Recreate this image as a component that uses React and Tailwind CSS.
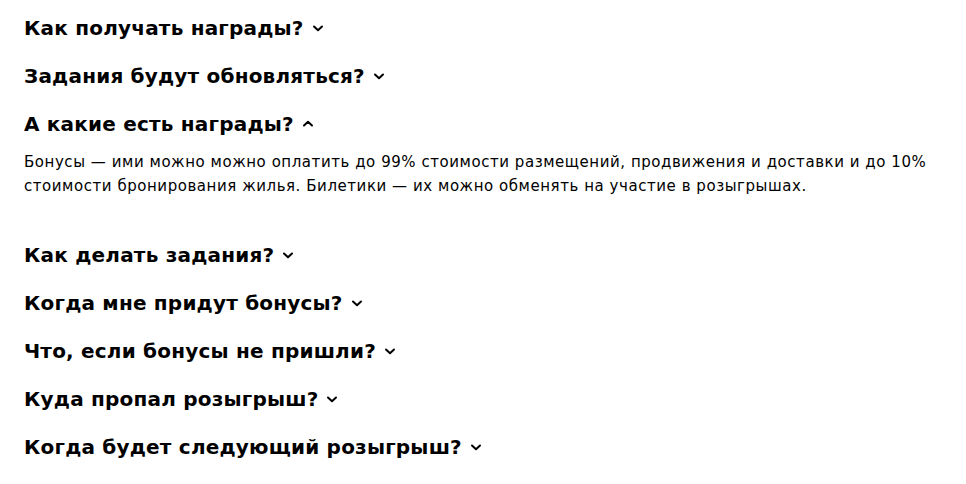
import React from "react";

const Chevron = ({ up }) => (
  <svg width="12" height="12" viewBox="0 0 12 12" className="ml-2 shrink-0" fill="none">
    {up ? (
      <path d="M2 7.5L6 3.8L10 7.5" stroke="#000" strokeWidth="2" strokeLinecap="round" strokeLinejoin="round" />
    ) : (
      <path d="M2 4.5L6 8.2L10 4.5" stroke="#000" strokeWidth="2" strokeLinecap="round" strokeLinejoin="round" />
    )}
  </svg>
);

const Q = ({ children, up }) => (
  <div className="flex h-12 items-center text-[20px] font-bold leading-7 tracking-[0.2px] text-black">
    <span>{children}</span>
    <Chevron up={up} />
  </div>
);

export default function App() {
  return (
    <div className="min-h-screen bg-white pl-6 pt-1" style={{ fontFamily: "'DejaVu Sans', sans-serif" }}>
      <Q>Как получать награды?</Q>
      <Q>Задания будут обновляться?</Q>
      <Q up>А какие есть награды?</Q>
      <p className="mt-[2px] mb-[33px] max-w-[925px] text-[15px] leading-6 tracking-[0.55px] text-black">
        Бонусы — ими можно можно оплатить до 99% стоимости размещений, продвижения и доставки и до 10% стоимости бронирования жилья. Билетики — их можно обменять на участие в розыгрышах.
      </p>
      <Q>Как делать задания?</Q>
      <Q>Когда мне придут бонусы?</Q>
      <Q>Что, если бонусы не пришли?</Q>
      <Q>Куда пропал розыгрыш?</Q>
      <Q>Когда будет следующий розыгрыш?</Q>
    </div>
  );
}
